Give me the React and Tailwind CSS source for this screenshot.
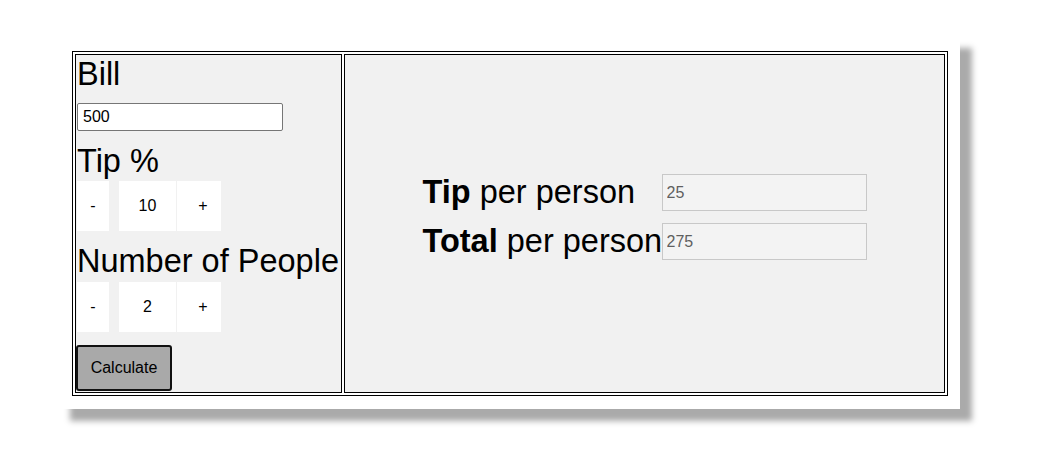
import React from "react";

function Stepper({ value }) {
  return (
    <div className="flex items-start h-[50px] mt-[1px]">
      <button className="w-[32px] h-[50px] bg-white text-[16px] text-black flex items-center justify-center">-</button>
      <input
        readOnly
        value={value}
        className="ml-[10px] w-[57px] h-[50px] bg-white text-[16px] text-black text-center outline-none border-0"
      />
      <button className="ml-[1px] w-[44px] h-[50px] bg-white text-[16px] text-black flex items-center justify-center pl-[8px]">+</button>
    </div>
  );
}

export default function App() {
  return (
    <div className="h-[468px] overflow-hidden bg-white font-['Liberation_Sans',Arial,sans-serif] text-black pl-[58px] pt-[36px]">
      <div className="w-[902px] h-[373px] bg-white pl-[14px] pt-[15px] shadow-[12px_12px_6px_#aaaaaa]">
        <div className="w-[876px] h-[345px] border border-black p-[2px] flex gap-[2px] bg-white">
          {/* Left cell */}
          <div className="w-[267px] h-[339px] border border-black bg-[#f1f1f1] p-[1px] flex flex-col">
            <div className="text-[32.5px] leading-[37px] h-[37px]">Bill</div>
            <input
              readOnly
              value="500"
              className="mt-[10px] w-[206px] h-[28px] border border-[#767676] rounded-[2px] bg-white px-[5px] text-[16px] outline-none"
            />
            <div className="mt-[12px] text-[32.5px] leading-[37px] h-[37px]">Tip %</div>
            <Stepper value="10" />
            <div className="mt-[12px] text-[32.5px] leading-[37px] h-[37px] whitespace-nowrap">Number of People</div>
            <div className="mt-[1px]">
              <Stepper value="2" />
            </div>
            <button className="mt-[13px] -ml-[1px] w-[96px] h-[47px] bg-[#a9a9a9] border-2 border-[#111] rounded-[3px] text-[16px] text-black">
              Calculate
            </button>
          </div>
          {/* Right cell */}
          <div className="w-[601px] h-[339px] border border-black bg-[#f1f1f1] flex items-center justify-center pb-[13px]">
            <div className="grid grid-cols-[239px_205px] gap-y-[12px] items-center">
              <div className="text-[32.5px] leading-[37px] h-[37px] whitespace-nowrap">
                <b>Tip</b> per person
              </div>
              <input
                readOnly
                disabled
                value="25"
                className="h-[37px] w-[205px] border border-[#c8c8c8] bg-[#f3f3f3] pl-[4px] text-[16px] text-[#5f5f5f] outline-none"
              />
              <div className="text-[32.5px] leading-[37px] h-[37px] whitespace-nowrap">
                <b>Total</b> per person
              </div>
              <input
                readOnly
                disabled
                value="275"
                className="h-[37px] w-[205px] border border-[#c8c8c8] bg-[#f3f3f3] pl-[4px] text-[16px] text-[#5f5f5f] outline-none"
              />
            </div>
          </div>
        </div>
      </div>
    </div>
  );
}
